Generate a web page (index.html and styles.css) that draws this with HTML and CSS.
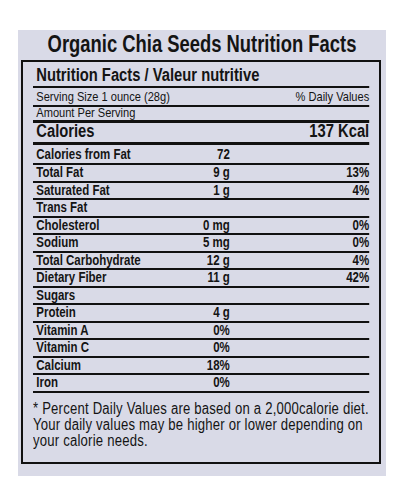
FILE: index.html
```html
<!DOCTYPE html>
<html lang="en">
<head>
    <meta charset="UTF-8">
    <meta name="viewport" content="width=device-width, initial-scale=1.0">
    <title>chia seeds nutrition facts</title>
    <link rel="stylesheet" href="styles.css">
</head>
<body>

    <div class="panel">
        <h1 class="title"><span>Organic Chia Seeds Nutrition Facts</span></h1>

        <div class="label">
            <!-- narrow print: the sheet is squeezed sideways -->
            <div class="sheet">
                <h2 class="label-head">Nutrition Facts / Valeur nutritive</h2>
                <div class="serving">
                    <span class="name">Serving Size 1 ounce (28g)</span>
                    <span>% Daily Values</span>
                </div>
                <div class="amount-per name">Amount Per Serving</div>
                <div class="calories">
                    <span class="name">Calories</span>
                    <span>137 Kcal</span>
                </div>

                <div class="row first">
                    <span class="name">Calories from Fat</span><span class="amt">72</span><span class="dv"></span>
                </div>
                <div class="row">
                    <span class="name">Total Fat</span><span class="amt">9 g</span><span class="dv">13%</span>
                </div>
                <div class="row">
                    <span class="name">Saturated Fat</span><span class="amt">1 g</span><span class="dv">4%</span>
                </div>
                <div class="row">
                    <span class="name">Trans Fat</span><span class="amt"></span><span class="dv"></span>
                </div>
                <div class="row">
                    <span class="name">Cholesterol</span><span class="amt">0 mg</span><span class="dv">0%</span>
                </div>
                <div class="row">
                    <span class="name">Sodium</span><span class="amt">5 mg</span><span class="dv">0%</span>
                </div>
                <div class="row">
                    <span class="name">Total Carbohydrate</span><span class="amt">12 g</span><span class="dv">4%</span>
                </div>
                <div class="row">
                    <span class="name">Dietary Fiber</span><span class="amt">11 g</span><span class="dv">42%</span>
                </div>
                <div class="row">
                    <span class="name">Sugars</span><span class="amt"></span><span class="dv"></span>
                </div>
                <div class="row">
                    <span class="name">Protein</span><span class="amt">4 g</span><span class="dv"></span>
                </div>
                <div class="row">
                    <span class="name">Vitamin A</span><span class="amt">0%</span><span class="dv"></span>
                </div>
                <div class="row">
                    <span class="name">Vitamin C</span><span class="amt">0%</span><span class="dv"></span>
                </div>
                <div class="row">
                    <span class="name">Calcium</span><span class="amt">18%</span><span class="dv"></span>
                </div>
                <div class="row">
                    <span class="name">Iron</span><span class="amt">0%</span><span class="dv"></span>
                </div>

                <p class="note">* Percent Daily Values are based on a 2,000calorie diet. Your daily values may be higher or lower depending on your calorie needs.</p>
            </div>
        </div>
    </div>

</body>
</html>
```

FILE: styles.css
```css
body{
    margin: 0;
    padding: 0;
    background: #fff;
    color: #141414;
    font-family: "Liberation Sans", Arial, sans-serif;
}

.panel{
    margin: 30px 18px 0;
    width: 368px;
    height: 446px;
    background: #d9dae7;
    display: flex;
    flex-direction: column;
}

.title{
    margin: 0;
    height: 30px;
    line-height: 28px;
    font-size: 23px;
    font-weight: bold;
    display: flex;
    justify-content: center;
    white-space: nowrap;
}
.title span{
    display: inline-block;
    transform: scaleX(0.8);
}

/* the bordered label box */
.label{
    margin: 0 5px 0 3px;
    height: 400px;
    border: 2px solid #111;
    padding: 0 10px;
}

.sheet{
    width: 410px;
    margin-right: -74px;
    transform: scaleX(0.82);
    transform-origin: 0 0;
}

.name{
    padding-left: 4px;
}

.label-head{
    margin: 0;
    padding: 2px 0 0 4px;
    line-height: 22px;
    font-size: 18px;
    font-weight: bold;
    border-bottom: 2px solid #111;
}

.serving{
    display: flex;
    justify-content: space-between;
    font-size: 13.5px;
    line-height: 17px;
    border-bottom: 2px solid #111;
}

.amount-per{
    font-size: 13.5px;
    line-height: 12px;
    height: 13px;
    border-bottom: 3px solid #111;
}

.calories{
    display: flex;
    justify-content: space-between;
    font-size: 18px;
    font-weight: bold;
    line-height: 16px;
    padding-bottom: 3px;
    border-bottom: 3px solid #111;
}

.row{
    display: grid;
    grid-template-columns: 1fr 70px 170px;
    font-size: 14px;
    font-weight: bold;
    line-height: 14px;
    padding-bottom: 1.5px;
    border-bottom: 2px solid #111;
}
.row.first{
    padding-top: 2px;
    padding-bottom: 2px;
}
.amt, .dv{
    text-align: right;
}

.note{
    margin: 0;
    padding-top: 8px;
    font-size: 16px;
    line-height: 16px;
    letter-spacing: 0.25px;
}
```
